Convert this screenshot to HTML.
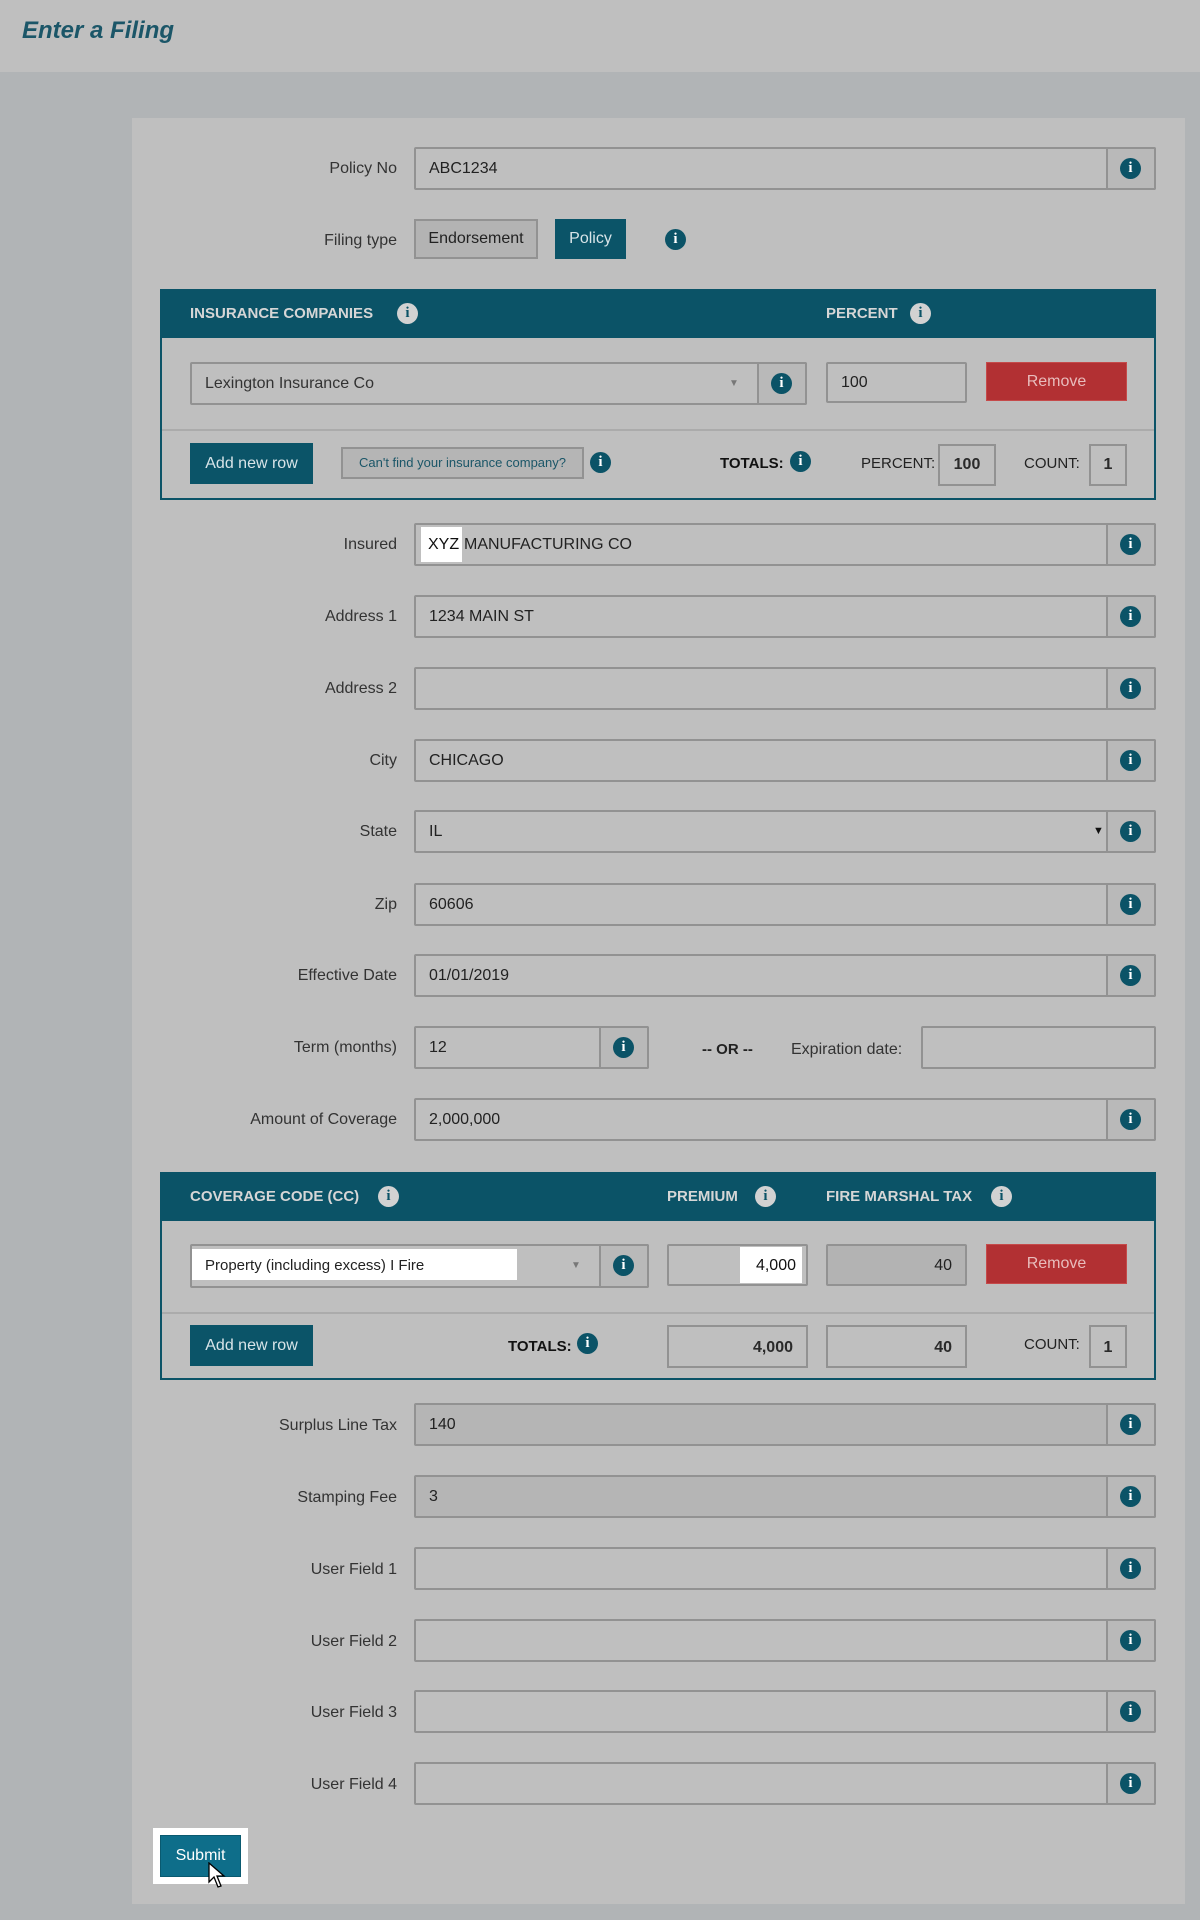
<!DOCTYPE html>
<html><head><meta charset="utf-8"><style>
*{box-sizing:border-box;margin:0;padding:0}
body{width:1200px;height:1920px;background:#b1b4b6;font-family:"Liberation Sans",sans-serif;position:relative;overflow:hidden;color:#2a2a2a}
.a{position:absolute}
.hdr{left:0;top:0;width:1200px;height:72px;background:#bfbfbf}
.title{left:22px;top:17px;font-size:24px;font-weight:bold;font-style:italic;color:#1b5668}
.card{left:132px;top:118px;width:1053px;height:1786px;background:#bfbfbf}
.lbl{width:250px;text-align:right;font-size:16px;color:#333;line-height:20px;margin-top:2px}
.inp{border:2px solid #929292;border-radius:2px;background:#bfbfbf;font-size:16px;line-height:39px;padding-left:13px;color:#222}
.ib{position:absolute;top:-2px;right:-2px;width:50px;bottom:-2px;border:2px solid #929292;border-radius:0 2px 2px 0;background:#b9b9b9}
.ic{display:inline-block;width:21px;height:21px;border-radius:50%;background:#0b5367;color:#fff;font:bold 15px/21px "Liberation Serif",serif;text-align:center}
.ib .ic{position:absolute;left:12px;top:9px}
.icl{background:#d2d2d2;color:#0b5367}
.panel{border:2px solid #0b5367;background:#bfbfbf}
.ph{background:#0b5367;height:49px}
.pt{font-size:15px;font-weight:bold;color:#d6d6d6;line-height:20px}
.btn{background:#0b5468;color:#d8e4e8;font-size:16px;text-align:center}
.rem{background:#b23033;color:#e8bcbc;font-size:16px;text-align:center;border:1px solid #c54a4a}
.box{border:2px solid #929292;font-size:16px;font-weight:bold;text-align:center;background:#bfbfbf}
.sep{height:2px;background:#ababab}
.sm{font-size:15px;color:#222}
</style></head><body>
<div class="a hdr"></div>
<div class="a title">Enter a Filing</div>
<div class="a card"></div>

<div class="a lbl" style="left:147px;top:157px">Policy No</div>
<div class="a inp" style="left:414px;top:147px;width:742px;height:43px">ABC1234<div class="ib"><span class="ic">i</span></div></div>

<div class="a lbl" style="left:147px;top:229px">Filing type</div>
<div class="a" style="left:414px;top:219px;width:124px;height:40px;border:2px solid #929292;background:#b3b3b3;font-size:16px;text-align:center;line-height:36px;color:#222">Endorsement</div>
<div class="a btn" style="left:555px;top:219px;width:71px;height:40px;line-height:40px">Policy</div>
<span class="a ic" style="left:665px;top:229px">i</span>

<div class="a panel" style="left:160px;top:289px;width:996px;height:211px"></div>
<div class="a ph" style="left:160px;top:289px;width:996px"></div>
<div class="a pt" style="left:190px;top:304px">INSURANCE COMPANIES</div>
<span class="a ic icl" style="left:397px;top:303px">i</span>
<div class="a pt" style="left:826px;top:304px">PERCENT</div>
<span class="a ic icl" style="left:910px;top:303px">i</span>
<div class="a inp" style="left:190px;top:362px;width:617px;height:43px;color:#333">Lexington Insurance Co<span style="position:absolute;left:537px;top:0;font-size:10px;color:#777">▼</span><div class="ib"><span class="ic">i</span></div></div>
<div class="a inp" style="left:826px;top:362px;width:141px;height:41px;line-height:37px">100</div>
<div class="a rem" style="left:986px;top:362px;width:141px;height:39px;line-height:37px">Remove</div>
<div class="a sep" style="left:162px;top:429px;width:992px"></div>
<div class="a btn" style="left:190px;top:443px;width:123px;height:41px;line-height:41px">Add new row</div>
<div class="a" style="left:341px;top:447px;width:243px;height:32px;border:2px solid #929292;background:#b5b5b5;font-size:13px;color:#1b5668;text-align:center;line-height:28px">Can't find your insurance company?</div>
<span class="a ic" style="left:590px;top:452px">i</span>
<div class="a" style="left:720px;top:455px;font-size:15px;font-weight:bold;color:#111">TOTALS:</div>
<span class="a ic" style="left:790px;top:451px">i</span>
<div class="a sm" style="left:861px;top:455px">PERCENT:</div>
<div class="a box" style="left:938px;top:444px;width:58px;height:42px;line-height:38px">100</div>
<div class="a sm" style="left:1024px;top:455px">COUNT:</div>
<div class="a box" style="left:1089px;top:444px;width:38px;height:42px;line-height:38px">1</div>

<div class="a lbl" style="left:147px;top:533px">Insured</div>
<div class="a inp" style="left:414px;top:523px;width:742px;height:43px;padding-left:48px">MANUFACTURING CO<div class="ib"><span class="ic">i</span></div></div>
<div class="a" style="left:421px;top:527px;width:41px;height:35px;background:#fff;font-size:16px;line-height:35px;padding-left:7px;color:#111">XYZ</div>
<div class="a lbl" style="left:147px;top:605px">Address 1</div>
<div class="a inp" style="left:414px;top:595px;width:742px;height:43px">1234 MAIN ST<div class="ib"><span class="ic">i</span></div></div>
<div class="a lbl" style="left:147px;top:677px">Address 2</div>
<div class="a inp" style="left:414px;top:667px;width:742px;height:43px"><div class="ib"><span class="ic">i</span></div></div>
<div class="a lbl" style="left:147px;top:749px">City</div>
<div class="a inp" style="left:414px;top:739px;width:742px;height:43px">CHICAGO<div class="ib"><span class="ic">i</span></div></div>
<div class="a lbl" style="left:147px;top:820px">State</div>
<div class="a inp" style="left:414px;top:810px;width:742px;height:43px">IL<span style="position:absolute;left:677px;top:0;font-size:11px;color:#111">▼</span><div class="ib"><span class="ic">i</span></div></div>
<div class="a lbl" style="left:147px;top:893px">Zip</div>
<div class="a inp" style="left:414px;top:883px;width:742px;height:43px">60606<div class="ib"><span class="ic">i</span></div></div>
<div class="a lbl" style="left:147px;top:964px">Effective Date</div>
<div class="a inp" style="left:414px;top:954px;width:742px;height:43px">01/01/2019<div class="ib"><span class="ic">i</span></div></div>
<div class="a lbl" style="left:147px;top:1036px">Term (months)</div>
<div class="a inp" style="left:414px;top:1026px;width:235px;height:43px">12<div class="ib"><span class="ic">i</span></div></div>
<div class="a" style="left:702px;top:1041px;font-size:15px;font-weight:bold;color:#222">-- OR --</div>
<div class="a" style="left:791px;top:1041px;font-size:16px;color:#333">Expiration date:</div>
<div class="a inp" style="left:921px;top:1026px;width:235px;height:43px"></div>
<div class="a lbl" style="left:147px;top:1108px">Amount of Coverage</div>
<div class="a inp" style="left:414px;top:1098px;width:742px;height:43px">2,000,000<div class="ib"><span class="ic">i</span></div></div>

<div class="a panel" style="left:160px;top:1172px;width:996px;height:208px"></div>
<div class="a ph" style="left:160px;top:1172px;width:996px"></div>
<div class="a pt" style="left:190px;top:1187px">COVERAGE CODE (CC)</div>
<span class="a ic icl" style="left:378px;top:1186px">i</span>
<div class="a pt" style="left:667px;top:1187px">PREMIUM</div>
<span class="a ic icl" style="left:755px;top:1186px">i</span>
<div class="a pt" style="left:826px;top:1187px">FIRE MARSHAL TAX</div>
<span class="a ic icl" style="left:991px;top:1186px">i</span>
<div class="a inp" style="left:190px;top:1244px;width:459px;height:44px"><span style="position:absolute;left:379px;top:0;font-size:10px;color:#777">▼</span><div class="ib"><span class="ic">i</span></div></div>
<div class="a" style="left:192px;top:1249px;width:325px;height:31px;background:#fff;font-size:15px;line-height:33px;padding-left:13px;color:#222">Property (including excess) I Fire</div>
<div class="a inp" style="left:667px;top:1244px;width:141px;height:42px"></div>
<div class="a" style="left:740px;top:1247px;width:62px;height:36px;background:#fff;font-size:16px;line-height:38px;text-align:right;padding-right:6px;color:#111">4,000</div>
<div class="a inp" style="left:826px;top:1244px;width:141px;height:42px;background:#b3b3b3;text-align:right;padding-right:13px;line-height:40px">40</div>
<div class="a rem" style="left:986px;top:1244px;width:141px;height:40px;line-height:38px">Remove</div>
<div class="a sep" style="left:162px;top:1312px;width:992px"></div>
<div class="a btn" style="left:190px;top:1325px;width:123px;height:41px;line-height:41px">Add new row</div>
<div class="a" style="left:508px;top:1338px;font-size:15px;font-weight:bold;color:#111">TOTALS:</div>
<span class="a ic" style="left:577px;top:1333px">i</span>
<div class="a box" style="left:667px;top:1325px;width:141px;height:43px;line-height:41px;text-align:right;padding-right:13px">4,000</div>
<div class="a box" style="left:826px;top:1325px;width:141px;height:43px;line-height:41px;text-align:right;padding-right:13px">40</div>
<div class="a sm" style="left:1024px;top:1336px">COUNT:</div>
<div class="a box" style="left:1089px;top:1325px;width:38px;height:43px;line-height:41px">1</div>

<div class="a lbl" style="left:147px;top:1414px">Surplus Line Tax</div>
<div class="a inp" style="left:414px;top:1403px;width:742px;height:43px;background:#b5b5b5">140<div class="ib"><span class="ic">i</span></div></div>
<div class="a lbl" style="left:147px;top:1486px">Stamping Fee</div>
<div class="a inp" style="left:414px;top:1475px;width:742px;height:43px;background:#b5b5b5">3<div class="ib"><span class="ic">i</span></div></div>
<div class="a lbl" style="left:147px;top:1558px">User Field 1</div>
<div class="a inp" style="left:414px;top:1547px;width:742px;height:43px"><div class="ib"><span class="ic">i</span></div></div>
<div class="a lbl" style="left:147px;top:1630px">User Field 2</div>
<div class="a inp" style="left:414px;top:1619px;width:742px;height:43px"><div class="ib"><span class="ic">i</span></div></div>
<div class="a lbl" style="left:147px;top:1701px">User Field 3</div>
<div class="a inp" style="left:414px;top:1690px;width:742px;height:43px"><div class="ib"><span class="ic">i</span></div></div>
<div class="a lbl" style="left:147px;top:1773px">User Field 4</div>
<div class="a inp" style="left:414px;top:1762px;width:742px;height:43px"><div class="ib"><span class="ic">i</span></div></div>

<div class="a" style="left:153px;top:1828px;width:95px;height:56px;background:#fff"></div>
<div class="a" style="left:160px;top:1835px;width:81px;height:42px;background:#0e6e8a;border:1px solid #0a5a70;color:#fff;font-size:16px;text-align:center;line-height:40px">Submit</div>
<svg class="a" style="left:208px;top:1862px" width="20" height="28" viewBox="0 0 20 28"><path d="M1 1 L1 20 L6 15 L10 25 L13 24 L9 14 L16 14 Z" fill="#fff" stroke="#000" stroke-width="1.3"/></svg>
</body></html>
